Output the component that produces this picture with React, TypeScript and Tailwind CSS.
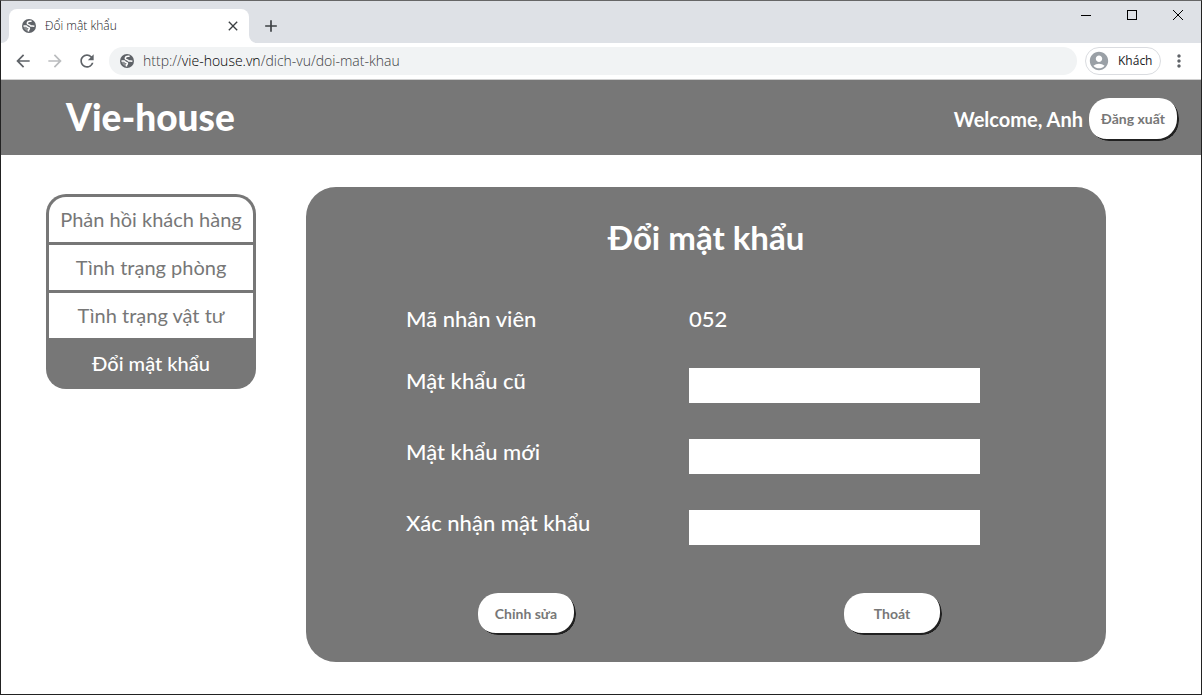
import React from "react";
import {
  MdAccountCircle,
  MdAdd,
  MdArrowBack,
  MdArrowForward,
  MdClose,
  MdMoreVert,
  MdRefresh,
} from "react-icons/md";

const menu = [
  { label: "Phản hồi khách hàng", href: "#phan-hoi" },
  { label: "Tình trạng phòng", href: "#phong" },
  { label: "Tình trạng vật tư", href: "#vat-tu" },
  { label: "Đổi mật khẩu", href: "#doi-mat-khau", active: true },
];

const fields = [
  { id: "old-password", label: "Mật khẩu cũ" },
  { id: "new-password", label: "Mật khẩu mới" },
  { id: "confirm-password", label: "Xác nhận mật khẩu" },
];

const raised =
  "rounded-[20px] bg-white pr-[2px] text-center text-sm leading-4 font-bold text-[#777777] shadow-[inset_-2px_-2px_0_#212121]";

function Globe() {
  return (
    <svg viewBox="0 0 14 14" className="mr-[9px] size-[14px] shrink-0" aria-hidden="true">
      <circle cx="7" cy="7" r="7" fill="#5f6368" />
      <g fill="none" stroke="#fff" strokeLinejoin="round" strokeWidth="1.5">
        <path d="M9.6 2.3H8.2C6.7 2.3 5.3 3.2 5.3 4.5C5.3 5.9 7.5 5.3 8.2 6.5C8.7 7.3 10.2 6.9 12.4 7.2" />
        <path d="M1.5 7.1H4C5.4 7.1 5 8.5 6.3 8.5C7.9 8.7 7.7 10.3 6.5 10.6V12.4" />
      </g>
      <path d="M1.5 7.1H4.2L5.3 9.2L6.5 10.6V12.5C3.8 12.2 1.7 10 1.5 7.1Z" fill="#fff" fillOpacity="0.3" />
    </svg>
  );
}

function TabStrip() {
  return (
    <div className="flex h-[42px] items-end bg-[#dee1e6]">
      <div className="h-2 w-2 bg-white">
        <div className="h-2 w-2 rounded-br-lg bg-[#dee1e6]" />
      </div>
      <div className="flex h-[34px] w-60 items-center rounded-t-lg bg-white pr-2 pl-[13px]">
        <Globe />
        <span className="flex-1 truncate text-xs font-light text-[#202124]">Đổi mật khẩu</span>
        <button type="button" aria-label="Đóng thẻ" className="text-[#3c4043]">
          <MdClose className="size-4" />
        </button>
      </div>
      <div className="h-2 w-2 bg-white">
        <div className="h-2 w-2 rounded-bl-lg bg-[#dee1e6]" />
      </div>
      <button type="button" aria-label="Thẻ mới" className="ml-1 flex h-[34px] items-center text-[#3c4043]">
        <MdAdd className="size-5" />
      </button>
      <div className="ml-auto flex h-full text-black">
        <button type="button" aria-label="Thu nhỏ" className="flex h-7 w-[46px] items-center justify-center">
          <svg viewBox="0 0 10 10" className="size-[10px]" fill="none" stroke="currentColor">
            <path d="M0 5.5h10" />
          </svg>
        </button>
        <button type="button" aria-label="Phóng to" className="flex h-7 w-[46px] items-center justify-center">
          <svg viewBox="0 0 10 10" className="size-[10px]" fill="none" stroke="currentColor">
            <rect x="0.5" y="0.5" width="9" height="9" />
          </svg>
        </button>
        <button type="button" aria-label="Đóng" className="flex h-7 w-[46px] items-center justify-center">
          <svg viewBox="0 0 10 10" className="size-[10px]" fill="none" stroke="currentColor">
            <path d="M0 0l10 10M10 0L0 10" />
          </svg>
        </button>
      </div>
    </div>
  );
}

function Toolbar() {
  return (
    <div className="flex h-[37px] items-center border-b border-[#d0d0d0] bg-white pr-3 pl-3 text-[#5f6368]">
      <button type="button" aria-label="Quay lại">
        <MdArrowBack className="size-5" />
      </button>
      <button type="button" aria-label="Tiến" className="ml-3 text-[#babcbe]">
        <MdArrowForward className="size-5" />
      </button>
      <button type="button" aria-label="Tải lại" className="ml-3">
        <MdRefresh className="size-5" />
      </button>
      <div className="ml-3 flex h-7 flex-1 items-center rounded-full bg-[#f1f3f4] pl-[11px]">
        <Globe />
        <span className="text-sm font-light text-[#3c4043]">
          http://<span className="text-black">vie-house.vn</span>/dich-vu/doi-mat-khau
        </span>
      </div>
      <button
        type="button"
        className="ml-2 flex h-7 w-[76px] items-center gap-2 rounded-full border border-[#dadce0] pl-[2px] text-xs text-[#202124]"
      >
        <MdAccountCircle className="size-[22px] text-[#9aa0a6]" />
        Khách
      </button>
      <button type="button" aria-label="Trình đơn" className="ml-2">
        <MdMoreVert className="size-5" />
      </button>
    </div>
  );
}

export default function App() {
  return (
    <div className="flex min-h-screen flex-col border border-[#222222] border-t-[#666666] bg-white font-['Open_Sans',sans-serif]">
      <TabStrip />
      <Toolbar />
      <div className="flex-1 font-['Lato',sans-serif]">
        <header className="flex h-[75px] items-center justify-between bg-[#777777] pr-[22px] pl-[65px] text-white">
          <h1 className="pb-[2px] text-[37px] leading-[44px] font-black">Vie-house</h1>
          <div className="flex items-center gap-[6px] pt-[3px]">
            <span className="text-xl font-bold">Welcome, Anh</span>
            <button type="button" className={`${raised} h-[43px] w-[90px]`}>
              Đăng xuất
            </button>
          </div>
        </header>
        <div className="flex items-start gap-[50px] pt-8 pr-[95px] pb-8 pl-[45px]">
          <nav className="mt-[7px] flex w-[210px] shrink-0 flex-col gap-[3px] rounded-[20px] bg-[#777777] p-[3px] text-center text-xl leading-[25px]">
            {menu.map((item) => (
              <a
                key={item.label}
                href={item.href}
                className={
                  item.active
                    ? "py-[10px] font-medium text-white"
                    : "bg-white py-[10px] text-[#777777] first:rounded-t-[17px]"
                }
              >
                {item.label}
              </a>
            ))}
          </nav>
          <form
            className="max-w-[960px] flex-1 rounded-[30px] bg-[#777777] pt-[29px] pr-[126px] pb-[27px] pl-[100px] text-white"
            onSubmit={(e) => e.preventDefault()}
          >
            <h2 className="pl-[26px] text-center text-[33px] leading-[42px] font-bold">Đổi mật khẩu</h2>
            <div className="mt-12 grid grid-cols-[283fr_291fr] items-start gap-y-9 text-[22px] leading-[26px] font-medium">
              <span>Mã nhân viên</span>
              <span>052</span>
              {fields.map((field) => (
                <React.Fragment key={field.id}>
                  <label htmlFor={field.id}>{field.label}</label>
                  <input id={field.id} type="password" className="h-[35px] w-full bg-white px-2 text-[#777777]" />
                </React.Fragment>
              ))}
            </div>
            <div className="mt-12 flex justify-between pr-[38px] pl-[72px]">
              <button type="submit" className={`${raised} h-[42px] w-[98px]`}>
                Chỉnh sửa
              </button>
              <button type="button" className={`${raised} h-[42px] w-[98px]`}>
                Thoát
              </button>
            </div>
          </form>
        </div>
      </div>
    </div>
  );
}
